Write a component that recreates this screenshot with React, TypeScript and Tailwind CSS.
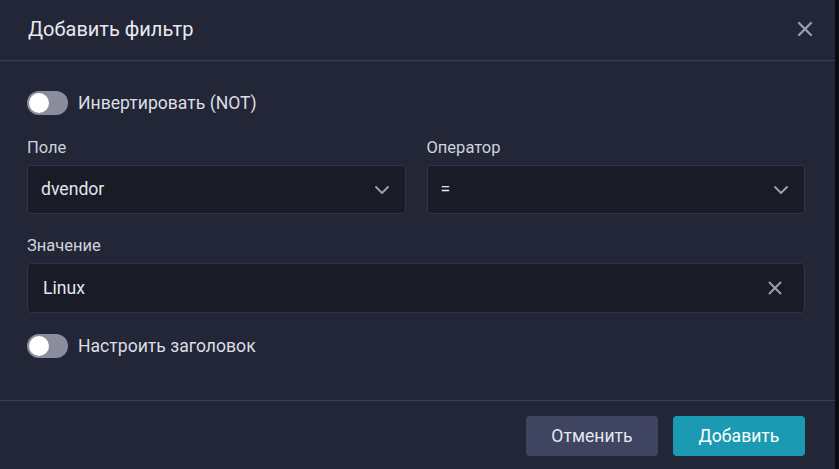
import React, { useState } from 'react';
import { ChevronDown, X } from 'lucide-react';

const Toggle: React.FC<{ on: boolean; onChange: () => void; label: string }> = ({ on, onChange, label }) => (
  <button onClick={onChange} className="flex items-center gap-[10px] h-6 text-left">
    <span className={`relative w-[41px] h-6 rounded-full ${on ? 'bg-[#1b9ab3]' : 'bg-[#8a8d9e]'}`}>
      <span className={`absolute top-[2px] w-5 h-5 rounded-full bg-white ${on ? 'left-[19px]' : 'left-[2px]'}`}></span>
    </span>
    <span className="text-[17.6px] text-[#dcdee6]">{label}</span>
  </button>
);

const Select: React.FC<{ value: string }> = ({ value }) => (
  <div className="h-[49px] flex items-center justify-between rounded-[4px] border border-[#30344a] bg-[#191b26] pl-[13px] pr-[11px]">
    <span className="text-[17.6px] text-[#e4e6ec]">{value}</span>
    <ChevronDown size={24} strokeWidth={2} className="text-[#9a9db0]" />
  </div>
);

const Label: React.FC<{ children: React.ReactNode }> = ({ children }) => (
  <div className="text-[16.5px] text-[#d0d3dc] leading-5 mb-[7px]">{children}</div>
);

export default function App() {
  const [invert, setInvert] = useState(false);
  const [customTitle, setCustomTitle] = useState(false);
  const [value, setValue] = useState('Linux');

  return (
    <div className="w-[839px] h-[469px] bg-[#0b0c10] flex" style={{ fontFamily: 'Roboto, "Noto Sans", sans-serif' }}>
      <div className="w-[835px] h-full bg-[#232636] flex flex-col">
        <div className="h-[61px] flex items-center justify-between pl-[28px] pr-[18px] border-b border-[#3a3e58] shrink-0">
          <h2 className="text-[20px] text-[#e8eaf0] -mt-[3px]">Добавить фильтр</h2>
          <X size={24} strokeWidth={2.3} className="text-[#9a9db0] -mt-[3px]" />
        </div>

        <div className="flex-1 pl-[27px] pr-[30px] pt-[30px]">
          <Toggle on={invert} onChange={() => setInvert(!invert)} label="Инвертировать (NOT)" />

          <div className="grid grid-cols-2 gap-[21px] mt-[23px]">
            <div>
              <Label>Поле</Label>
              <Select value="dvendor" />
            </div>
            <div>
              <Label>Оператор</Label>
              <Select value="=" />
            </div>
          </div>

          <div className="mt-[22px]">
            <Label>Значение</Label>
            <div className="h-[50px] flex items-center rounded-[4px] border border-[#30344a] bg-[#191b26] pl-[15px] pr-[18px]">
              <input
                value={value}
                onChange={(e) => setValue(e.target.value)}
                className="flex-1 bg-transparent outline-none text-[17.6px] text-[#e4e6ec]"
              />
              <X size={22} strokeWidth={2.2} className="text-[#9a9db0]" onClick={() => setValue('')} />
            </div>
          </div>

          <div className="mt-[21px]">
            <Toggle on={customTitle} onChange={() => setCustomTitle(!customTitle)} label="Настроить заголовок" />
          </div>
        </div>

        <div className="h-[69px] border-t border-[#3a3e58] flex items-start justify-end gap-[15px] pt-[15px] pr-[30px] shrink-0">
          <button className="w-[132px] h-10 rounded-[4px] bg-[#3f4460] text-[17.6px] text-[#e6e8ee]">Отменить</button>
          <button className="w-[132px] h-10 rounded-[4px] bg-[#1b9ab3] text-[17.6px] text-white">Добавить</button>
        </div>
      </div>
    </div>
  );
}
